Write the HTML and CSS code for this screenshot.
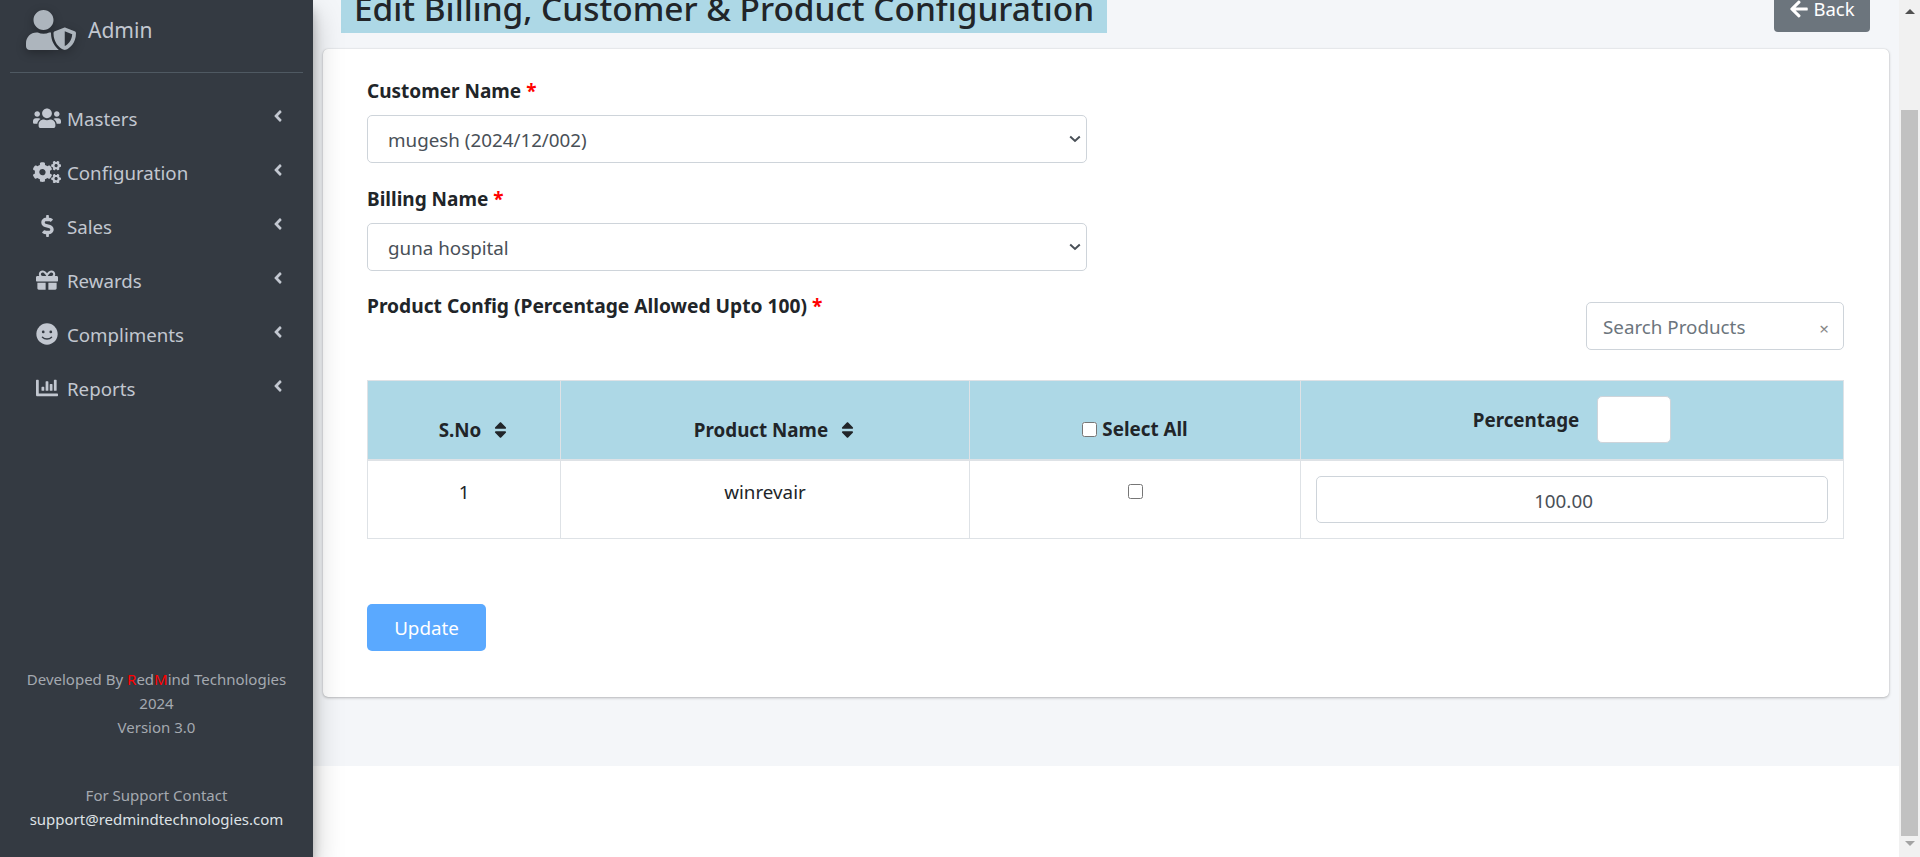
FILE: index.html
```html
<!DOCTYPE html>
<html lang="en">
<head>
<meta charset="utf-8">
<title>Edit Billing, Customer &amp; Product Configuration</title>
<link rel="stylesheet" href="styles.css">
</head>
<body>
<div class="app">
  <aside class="sidebar">
    <div class="user">
      <svg class="user-icon" viewBox="0 0 640 512"><path d="M622.3 271.1l-115.2-45c-4.1-1.6-12.6-3.7-22.2 0l-115.2 45c-10.7 4.2-17.7 14-17.7 24.9 0 111.6 68.7 188.8 132.9 213.9 9.6 3.7 18 1.6 22.2 0C558.4 489.9 640 420.5 640 296c0-10.9-7-20.7-17.7-24.9zM496 462.4V273.3l95.5 37.3c-5.6 87.1-60.9 135.4-95.5 151.8zM224 256c70.7 0 128-57.3 128-128S294.7 0 224 0 96 57.3 96 128s57.3 128 128 128zm96 40c0-2.5.8-4.7 1.1-7.2-2.5-.1-4.9-.8-7.5-.8h-16.7c-22.2 10.2-46.9 16-72.9 16s-50.6-5.8-72.9-16h-16.7C60.2 288 0 348.2 0 422.4V464c0 26.5 21.5 48 48 48h352c6.8 0 13.3-1.5 19.2-4-54-42.9-99.2-116.7-99.2-212z"/></svg>
      <span class="user-name">Admin</span>
    </div>
    <nav class="menu">
      <a class="item"><span class="ico"><svg class="i-wide" viewBox="0 0 640 512"><path d="M96 224c35.3 0 64-28.7 64-64s-28.7-64-64-64-64 28.7-64 64 28.7 64 64 64zm448 0c35.3 0 64-28.7 64-64s-28.7-64-64-64-64 28.7-64 64 28.7 64 64 64zm32 32h-64c-17.6 0-33.5 7.1-45.1 18.6 40.3 22.1 68.9 62 75.1 109.4h66c17.7 0 32-14.3 32-32v-32c0-35.3-28.7-64-64-64zm-256 0c61.9 0 112-50.1 112-112S381.9 32 320 32 208 82.1 208 144s50.1 112 112 112zm76.8 32h-8.3c-20.8 10-43.9 16-68.5 16s-47.6-6-68.5-16h-8.3C179.6 288 128 339.6 128 403.2V432c0 26.5 21.5 48 48 48h288c26.5 0 48-21.5 48-48v-28.8c0-63.6-51.6-115.2-115.2-115.2zm-223.7-13.4C161.5 263.1 145.6 256 128 256H64c-35.3 0-64 28.7-64 64v32c0 17.7 14.3 32 32 32h65.9c6.3-47.4 34.9-87.3 75.2-109.4z"/></svg></span><span class="label">Masters</span><svg class="chev" viewBox="0 0 256 512"><path d="M31.7 239l136-136c9.4-9.4 24.6-9.4 33.9 0l22.6 22.6c9.4 9.4 9.4 24.6 0 33.9L127.9 256l96.4 96.4c9.4 9.4 9.4 24.6 0 33.9L201.7 409c-9.4 9.4-24.6 9.4-33.9 0l-136-136c-9.5-9.4-9.5-24.6-.1-34z"/></svg></a>
      <a class="item"><span class="ico"><svg class="i-wide" viewBox="0 0 640 512"><path d="M512.1 191l-8.2 14.3c-3 5.3-9.4 7.5-15.1 5.4-11.8-4.4-22.6-10.7-32.1-18.6-4.6-3.8-5.8-10.5-2.8-15.7l8.2-14.3c-6.9-8-12.3-17.3-15.9-27.4h-16.5c-6 0-11.2-4.3-12.2-10.3-2-12-2.1-24.6 0-37.1 1-6 6.2-10.4 12.2-10.4h16.5c3.6-10.1 9-19.4 15.9-27.4l-8.2-14.3c-3-5.2-1.9-11.9 2.8-15.7 9.5-7.9 20.4-14.2 32.1-18.6 5.7-2.1 12.1.1 15.1 5.4l8.2 14.3c10.5-1.9 21.2-1.9 31.7 0L552 6.3c3-5.3 9.4-7.5 15.1-5.4 11.8 4.4 22.6 10.7 32.1 18.6 4.6 3.8 5.8 10.5 2.8 15.7l-8.2 14.3c6.9 8 12.3 17.3 15.9 27.4h16.5c6 0 11.2 4.3 12.2 10.3 2 12 2.1 24.6 0 37.1-1 6-6.2 10.4-12.2 10.4h-16.5c-3.6 10.1-9 19.4-15.9 27.4l8.2 14.3c3 5.2 1.9 11.9-2.8 15.7-9.5 7.9-20.4 14.2-32.1 18.6-5.7 2.1-12.1-.1-15.1-5.4l-8.2-14.3c-10.4 1.9-21.2 1.9-31.7 0zm-10.5-58.8c38.5 29.6 82.4-14.3 52.8-52.8-38.5-29.7-82.4 14.3-52.8 52.8zM386.3 286.1l33.7 16.8c10.1 5.8 14.5 18.1 10.5 29.1-8.9 24.2-26.4 46.4-42.6 65.8-7.4 8.9-20.2 11.1-30.3 5.3l-29.1-16.8c-16 13.7-34.6 24.6-54.9 31.7v33.6c0 11.6-8.3 21.6-19.7 23.6-24.6 4.2-50.4 4.4-75.9 0-11.5-2-20-11.9-20-23.6V418c-20.3-7.2-38.9-18-54.9-31.7L74 403c-10 5.8-22.9 3.6-30.3-5.3-16.2-19.4-33.3-41.6-42.2-65.7-4-10.9.4-23.2 10.5-29.1l33.3-16.8c-3.9-20.9-3.9-42.4 0-63.4L12 205.8c-10.1-5.8-14.6-18.1-10.5-29 8.9-24.2 26-46.4 42.2-65.8 7.4-8.9 20.2-11.1 30.3-5.3l29.1 16.8c16-13.7 34.6-24.6 54.9-31.7V57.1c0-11.5 8.2-21.5 19.6-23.5 24.6-4.2 50.5-4.4 76-.1 11.5 2 20 11.9 20 23.6v33.6c20.3 7.2 38.9 18 54.9 31.7l29.1-16.8c10-5.8 22.9-3.6 30.3 5.3 16.2 19.4 33.2 41.6 42.1 65.8 4 10.9.1 23.2-10 29.1l-33.7 16.8c3.9 21 3.9 42.5 0 63.5zm-117.6 21.1c59.2-77-28.7-164.9-105.7-105.7-59.2 77 28.7 164.9 105.7 105.7zm243.4 182.7l-8.2 14.3c-3 5.3-9.4 7.5-15.1 5.4-11.8-4.4-22.6-10.7-32.1-18.6-4.6-3.8-5.8-10.5-2.8-15.7l8.2-14.3c-6.9-8-12.3-17.3-15.9-27.4h-16.5c-6 0-11.2-4.3-12.2-10.3-2-12-2.1-24.6 0-37.1 1-6 6.2-10.4 12.2-10.4h16.5c3.6-10.1 9-19.4 15.9-27.4l-8.2-14.3c-3-5.2-1.9-11.9 2.8-15.7 9.5-7.9 20.4-14.2 32.1-18.6 5.7-2.1 12.1.1 15.1 5.4l8.2 14.3c10.5-1.9 21.2-1.9 31.7 0l8.2-14.3c3-5.3 9.4-7.5 15.1-5.4 11.8 4.4 22.6 10.7 32.1 18.6 4.6 3.8 5.8 10.5 2.8 15.7l-8.2 14.3c6.9 8 12.3 17.3 15.9 27.4h16.5c6 0 11.2 4.3 12.2 10.3 2 12 2.1 24.6 0 37.1-1 6-6.2 10.4-12.2 10.4h-16.5c-3.6 10.1-9 19.4-15.9 27.4l8.2 14.3c3 5.2 1.9 11.9-2.8 15.7-9.5 7.9-20.4 14.2-32.1 18.6-5.7 2.1-12.1-.1-15.1-5.4l-8.2-14.3c-10.4 1.9-21.2 1.9-31.7 0zM501.6 431c38.5 29.6 82.4-14.3 52.8-52.8-38.5-29.6-82.4 14.2-52.8 52.8z"/></svg></span><span class="label">Configuration</span><svg class="chev" viewBox="0 0 256 512"><path d="M31.7 239l136-136c9.4-9.4 24.6-9.4 33.9 0l22.6 22.6c9.4 9.4 9.4 24.6 0 33.9L127.9 256l96.4 96.4c9.4 9.4 9.4 24.6 0 33.9L201.7 409c-9.4 9.4-24.6 9.4-33.9 0l-136-136c-9.5-9.4-9.5-24.6-.1-34z"/></svg></a>
      <a class="item"><span class="ico"><svg class="i-dollar" viewBox="0 0 288 512"><path d="M209.2 233.4l-108-31.6C88.7 198.2 80 186.5 80 173.5c0-16.3 13.2-29.5 29.5-29.5h66.3c12.2 0 24.2 3.7 34.2 10.5 6.1 4.1 14.3 3.1 19.5-2l34.8-34c7.1-6.9 6.1-18.4-1.8-24.5C238 74.8 207.4 64.1 176 64V16c0-8.8-7.2-16-16-16h-32c-8.8 0-16 7.2-16 16v48h-2.5C45.8 64-5.4 118.7.5 183.6c4.2 46.1 39.4 83.6 83.8 96.6l102.5 30c12.5 3.7 21.2 15.3 21.2 28.3 0 16.3-13.2 29.5-29.5 29.5h-66.3C100 368 88 364.3 78 357.5c-6.1-4.1-14.3-3.1-19.5 2l-34.8 34c-7.1 6.9-6.1 18.4 1.8 24.5 24.5 19.2 55.1 29.9 86.5 30v48c0 8.8 7.2 16 16 16h32c8.8 0 16-7.2 16-16v-48.2c46.6-.9 90.3-28.6 105.7-72.7 21.5-61.6-14.6-124.8-72.5-141.7z"/></svg></span><span class="label">Sales</span><svg class="chev" viewBox="0 0 256 512"><path d="M31.7 239l136-136c9.4-9.4 24.6-9.4 33.9 0l22.6 22.6c9.4 9.4 9.4 24.6 0 33.9L127.9 256l96.4 96.4c9.4 9.4 9.4 24.6 0 33.9L201.7 409c-9.4 9.4-24.6 9.4-33.9 0l-136-136c-9.5-9.4-9.5-24.6-.1-34z"/></svg></a>
      <a class="item"><span class="ico"><svg class="i-std" viewBox="0 0 512 512"><path d="M32 448c0 17.7 14.3 32 32 32h160V320H32v128zm256 32h160c17.7 0 32-14.3 32-32V320H288v160zm192-320h-42.1c6.2-12.1 10.1-25.5 10.1-40 0-48.5-39.5-88-88-88-41.6 0-68.5 21.3-103 68.3-34.5-47-61.4-68.3-103-68.3-48.5 0-88 39.5-88 88 0 14.5 3.8 27.9 10.1 40H32c-17.7 0-32 14.3-32 32v80c0 8.8 7.2 16 16 16h480c8.8 0 16-7.2 16-16v-80c0-17.7-14.3-32-32-32zm-326.1 0c-22.1 0-40-17.9-40-40s17.9-40 40-40c19.9 0 34.6 3.3 86.1 80h-86.1zm206.1 0h-86.1c51.4-76.5 65.7-80 86.1-80 22.1 0 40 17.9 40 40s-17.9 40-40 40z"/></svg></span><span class="label">Rewards</span><svg class="chev" viewBox="0 0 256 512"><path d="M31.7 239l136-136c9.4-9.4 24.6-9.4 33.9 0l22.6 22.6c9.4 9.4 9.4 24.6 0 33.9L127.9 256l96.4 96.4c9.4 9.4 9.4 24.6 0 33.9L201.7 409c-9.4 9.4-24.6 9.4-33.9 0l-136-136c-9.5-9.4-9.5-24.6-.1-34z"/></svg></a>
      <a class="item"><span class="ico"><svg class="i-std" viewBox="0 0 512 512"><circle cx="256" cy="256" r="248"/><circle class="cut" cx="168" cy="208" r="32"/><circle class="cut" cx="344" cy="208" r="32"/><path class="smile" d="M150 330c55 58 157 58 212 0"/></svg></span><span class="label">Compliments</span><svg class="chev" viewBox="0 0 256 512"><path d="M31.7 239l136-136c9.4-9.4 24.6-9.4 33.9 0l22.6 22.6c9.4 9.4 9.4 24.6 0 33.9L127.9 256l96.4 96.4c9.4 9.4 9.4 24.6 0 33.9L201.7 409c-9.4 9.4-24.6 9.4-33.9 0l-136-136c-9.5-9.4-9.5-24.6-.1-34z"/></svg></a>
      <a class="item"><span class="ico"><svg class="i-std" viewBox="0 0 512 512"><path d="M332.8 320h38.4c6.4 0 12.8-6.4 12.8-12.8V172.8c0-6.4-6.4-12.8-12.8-12.8h-38.4c-6.4 0-12.8 6.4-12.8 12.8v134.4c0 6.4 6.4 12.8 12.8 12.8zm96 0h38.4c6.4 0 12.8-6.4 12.8-12.8V76.8c0-6.4-6.4-12.8-12.8-12.8h-38.4c-6.4 0-12.8 6.4-12.8 12.8v230.4c0 6.4 6.4 12.8 12.8 12.8zm-288 0h38.4c6.4 0 12.8-6.4 12.8-12.8v-70.4c0-6.4-6.4-12.8-12.8-12.8h-38.4c-6.4 0-12.8 6.4-12.8 12.8v70.4c0 6.4 6.4 12.8 12.8 12.8zm96 0h38.4c6.4 0 12.8-6.4 12.8-12.8V108.8c0-6.4-6.4-12.8-12.8-12.8h-38.4c-6.4 0-12.8 6.4-12.8 12.8v198.4c0 6.4 6.4 12.8 12.8 12.8zM496 384H64V80c0-8.84-7.16-16-16-16H16C7.16 64 0 71.16 0 80v336c0 17.67 14.33 32 32 32h464c8.84 0 16-7.16 16-16v-32c0-8.84-7.16-16-16-16z"/></svg></span><span class="label">Reports</span><svg class="chev" viewBox="0 0 256 512"><path d="M31.7 239l136-136c9.4-9.4 24.6-9.4 33.9 0l22.6 22.6c9.4 9.4 9.4 24.6 0 33.9L127.9 256l96.4 96.4c9.4 9.4 9.4 24.6 0 33.9L201.7 409c-9.4 9.4-24.6 9.4-33.9 0l-136-136c-9.5-9.4-9.5-24.6-.1-34z"/></svg></a>
    </nav>
    <footer class="side-foot">
      <p class="foot-block">Developed By <span class="red">R</span>ed<span class="red">M</span>ind Technologies<br>2024<br>Version 3.0</p>
      <p class="foot-block">For Support Contact<br><span class="mail">support@redmindtechnologies.com</span></p>
    </footer>
  </aside>

  <main class="main">
    <section class="content">
      <header class="page-head">
        <h1 class="title">Edit Billing, Customer &amp; Product Configuration</h1>
        <a class="back"><svg class="back-arrow" viewBox="0 0 448 512"><path d="M257.5 445.1l-22.2 22.2c-9.4 9.4-24.6 9.4-33.9 0L7 273c-9.4-9.4-9.4-24.6 0-33.9L201.4 44.7c9.4-9.4 24.6-9.4 33.9 0l22.2 22.2c9.5 9.5 9.3 25-.4 34.3L136.6 216H424c13.3 0 24 10.7 24 24v32c0 13.3-10.7 24-24 24H136.6l120.5 114.8c9.8 9.3 10 24.8.4 34.3z"/></svg>Back</a>
      </header>
      <div class="card">
        <label class="field-label">Customer Name <span class="req">*</span></label>
        <select class="field"><option>mugesh (2024/12/002)</option></select>
        <label class="field-label">Billing Name <span class="req">*</span></label>
        <select class="field"><option>guna hospital</option></select>
        <div class="config-row">
          <label class="field-label config-label">Product Config (Percentage Allowed Upto 100) <span class="req">*</span></label>
          <div class="search"><input class="search-input" type="text" placeholder="Search Products"><span class="clear">×</span></div>
        </div>
        <table class="grid">
          <colgroup><col class="c1"><col class="c2"><col class="c3"><col class="c4"></colgroup>
          <thead>
            <tr>
              <th><span class="th-in th-sort">S.No<svg class="sort" viewBox="0 0 320 512"><path d="M41 288h238c21.4 0 32.1 25.9 17 41L177 448c-9.4 9.4-24.6 9.4-33.9 0L24 329c-15.1-15.1-4.4-41 17-41zm255-105L177 64c-9.4-9.4-24.6-9.4-33.9 0L24 183c-15.1 15.1-4.4 41 17 41h238c21.4 0 32.1-25.9 17-41z"/></svg></span></th>
              <th><span class="th-in th-sort">Product Name<svg class="sort" viewBox="0 0 320 512"><path d="M41 288h238c21.4 0 32.1 25.9 17 41L177 448c-9.4 9.4-24.6 9.4-33.9 0L24 329c-15.1-15.1-4.4-41 17-41zm255-105L177 64c-9.4-9.4-24.6-9.4-33.9 0L24 183c-15.1 15.1-4.4 41 17 41h238c21.4 0 32.1-25.9 17-41z"/></svg></span></th>
              <th><span class="th-in th-check"><input class="check" type="checkbox">Select All</span></th>
              <th class="th-pct"><span class="th-in th-pct-in">Percentage<input class="pct-all" type="text"></span></th>
            </tr>
          </thead>
          <tbody>
            <tr>
              <td>1</td>
              <td>winrevair</td>
              <td><input class="check" type="checkbox"></td>
              <td class="td-pct"><input class="pct" type="text" value="100.00"></td>
            </tr>
          </tbody>
        </table>
        <button class="update" type="button">Update</button>
      </div>
    </section>
  </main>

  <div class="scrollbar">
    <span class="arrow-up"></span>
    <span class="thumb"></span>
    <span class="arrow-down"></span>
  </div>
</div>
</body>
</html>
```

FILE: styles.css
```css
* { box-sizing: border-box; }
html, body { margin: 0; height: 100%; overflow: hidden; }
body { font-family: "Noto Sans", "Open Sans", sans-serif; font-size: 18.8px; color: #212529; background: #fff; }
.app { display: flex; height: 857px; }

/* Sidebar */
.sidebar { position: relative; z-index: 2; width: 313px; flex: none; background: #343a42; box-shadow: 0 14px 28px rgba(0,0,0,.25), 0 10px 10px rgba(0,0,0,.22); display: flex; flex-direction: column; color: #c2c7d0; }
.user { height: 73px; margin: 0 10px; padding: 0 0 13px 16px; border-bottom: 1px solid #4f5962; display: flex; align-items: center; }
.user-icon { width: 50px; height: 40px; fill: #adb5bd; filter: drop-shadow(0 3px 5px rgba(0,0,0,.3)); }
.user-name { margin-left: 12px; font-size: 21px; }
.menu { display: flex; flex-direction: column; padding-top: 18px; }
.item { height: 54px; display: flex; align-items: center; padding-left: 33px; font-size: 18.7px; }
.ico { width: 28px; margin-right: 6px; display: flex; justify-content: center; fill: #c2c7d0; }
.i-wide { width: 28px; height: 22.4px; }
.i-std { width: 22px; height: 22px; }
.i-dollar { width: 13px; height: 22px; }
.cut { fill: #343a42; }
.smile { fill: none; stroke: #343a42; stroke-width: 32; stroke-linecap: round; }
.label { flex: 1; }
.chev { width: 10px; height: 18px; fill: #c2c7d0; margin: -4px 30px 0 0; }
.side-foot { margin-top: auto; padding-bottom: 26px; text-align: center; font-size: 15px; line-height: 24px; color: #a4a9b0; }
.foot-block { margin: 0 0 44px; }
.foot-block:last-child { margin-bottom: 0; }
.red { color: #f00; }
.mail { color: #dfe2e6; }

/* Main */
.main { flex: 1; min-width: 0; background: #fff; }
.content { background: #f4f6f9; height: 766px; padding: 0 10px; }
.page-head { display: flex; justify-content: space-between; align-items: flex-end; height: 33px; padding: 0 19px 0 18px; margin-bottom: 16px; }
.title { margin: 0; padding: 0 13px; background: #add8e6; font-size: 33.4px; font-weight: 500; line-height: 39px; height: 44px; flex: none; white-space: nowrap; }
.back { width: 96px; height: 44px; margin-bottom: 1px; padding-bottom: 3px; flex: none; background: #6c757d; border-radius: 4px; color: #fff; font-size: 18.5px; display: flex; align-items: center; justify-content: center; gap: 4px; }
.back-arrow { width: 20px; height: 20px; fill: #fff; }
.card { background: #fff; border-radius: 5px; height: 648px; padding: 30px 45px 0 44px; box-shadow: 0 0 1px rgba(0,0,0,.2), 0 1px 3px rgba(0,0,0,.25); }
.field-label { display: block; font-weight: 700; font-size: 19px; line-height: 24px; margin-bottom: 12px; color: #212529; }
.req { color: #f00; }
.field { display: block; width: 720px; height: 48px; margin-bottom: 24px; padding: 1px 16px 0 20px; appearance: none; background: #fff url("data:image/svg+xml,%3Csvg xmlns='http://www.w3.org/2000/svg' viewBox='0 0 12 8'%3E%3Cpath d='M1.2 1.5 6 6l4.8-4.5' fill='none' stroke='%23495057' stroke-width='2'/%3E%3C/svg%3E") no-repeat right 5px center / 12px 8px; border: 1px solid #ced4da; border-radius: 5px; font: inherit; color: #495057; }
.config-row { display: flex; justify-content: space-between; align-items: flex-start; height: 86px; margin-top: -1px; }
.config-label { margin: 0; font-size: 19.2px; }
.search { width: 258px; height: 48px; margin-top: 8px; border: 1px solid #ced4da; border-radius: 5px; display: flex; align-items: center; padding: 0 16px 0 16px; }
.search-input { flex: 1; min-width: 0; border: 0; outline: 0; padding: 2px 0 0; font: inherit; color: #495057; }
.search-input::placeholder { color: #6c757d; opacity: 1; }
.clear { color: #888; font-size: 17px; margin: 4px -2px 0 0; }

/* Table */
.grid { width: 1477px; table-layout: fixed; border-collapse: collapse; text-align: center; }
.c1 { width: 193px; }
.c2 { width: 409px; }
.c3 { width: 331px; }
.grid th, .grid td { border: 1px solid #dee2e6; }
.grid th { height: 79px; background: #add8e6; border-bottom-width: 2px; font-weight: 700; vertical-align: bottom; padding: 0 16px 16px; }
.grid td { height: 79px; vertical-align: top; padding: 19px 16px 0; line-height: 24px; }
.th-in { display: inline-flex; align-items: center; }
.th-sort { padding-left: 18px; }
.sort { width: 13px; height: 20px; margin-left: 13px; fill: #212529; }
.check { width: 15px; height: 15px; margin: 0 5px 0 0; }
.td-pct { padding: 15px !important; }
.grid td:nth-child(3) .check { margin: 0; }
.th-pct { vertical-align: middle !important; padding: 0 !important; }
.th-pct-in { gap: 18px; padding-top: 1px; }
.pct-all { width: 74px; height: 47px; margin-top: -1px; border: 1px solid #ced4da; border-radius: 5px; background: #fff; }
.pct { display: block; width: 100%; height: 47px; text-align: center; border: 1px solid #ced4da; border-radius: 5px; font: inherit; color: #495057; padding: 3px 33px 0 16px; }
.update { display: block; margin-top: 65px; width: 119px; height: 47px; background: #5aa9ff; color: #fff; border: 0; border-radius: 5px; font: inherit; }

/* Scrollbar */
.scrollbar { width: 21px; flex: none; background: #f1f1f1; display: flex; flex-direction: column; align-items: center; }
.arrow-up { margin-top: 9px; width: 0; height: 0; border: 5px solid transparent; border-top: 0; border-bottom-color: #505050; }
.thumb { width: 17px; height: 726px; margin-top: 96px; background: #c1c1c1; }
.arrow-down { margin-top: 5px; width: 0; height: 0; border: 5px solid transparent; border-bottom: 0; border-top-color: #a3a3a3; }
```
